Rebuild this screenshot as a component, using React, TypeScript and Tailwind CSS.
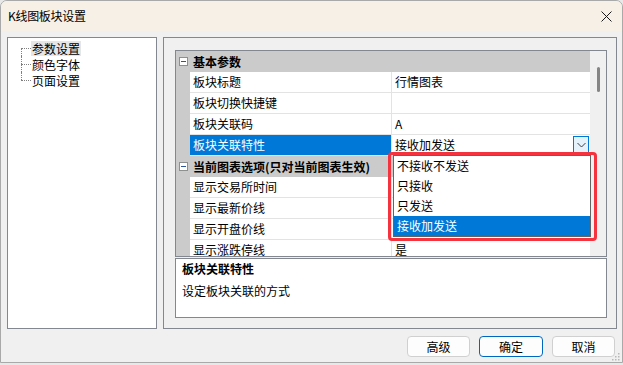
import { ReactElement } from 'react';

type Row = { name: string; value: string; selected?: boolean; combo?: boolean };
type Section = { title: string; rows: Row[] };

const sections: Section[] = [
  {
    title: '基本参数',
    rows: [
      { name: '板块标题', value: '行情图表' },
      { name: '板块切换快捷键', value: '' },
      { name: '板块关联码', value: 'A' },
      { name: '板块关联特性', value: '接收加发送', selected: true, combo: true },
    ],
  },
  {
    title: '当前图表选项(只对当前图表生效)',
    rows: [
      // values of these three sit under the open dropdown
      { name: '显示交易所时间', value: '' },
      { name: '显示最新价线', value: '' },
      { name: '显示开盘价线', value: '' },
      { name: '显示涨跌停线', value: '是' },
    ],
  },
];

const options = ['不接收不发送', '只接收', '只发送', '接收加发送'];
const treeItems = ['参数设置', '颜色字体', '页面设置'];

function TreeRow({ label, index, last }: { label: string; index: number; last: boolean }): ReactElement {
  return (
    <div className="flex h-[16px] items-stretch">
      <div className="ml-[13px] flex w-[10px] flex-col">
        <div className={`h-[8px] ${index === 0 ? '' : 'border-l border-dotted border-[#808080]'}`} />
        <div className={`h-[8px] border-t border-dotted border-[#808080] ${last ? '' : 'border-l'}`} />
      </div>
      <div className="flex items-center">
        <span className={`px-[1px] leading-[15px] ${index === 0 ? 'bg-[#e6e6e6]' : ''}`}>{label}</span>
      </div>
    </div>
  );
}

function MinusBox(): ReactElement {
  return (
    <div className="flex h-[9px] w-[9px] items-center justify-center border border-[#8e8f8f] bg-white">
      <div className="h-px w-[5px] bg-[#2b55a0]" />
    </div>
  );
}

export default function App(): ReactElement {
  return (
    <div
      className="relative h-[365px] w-[623px] overflow-hidden bg-[#e8e8e8] text-[12px] text-black"
      style={{ fontFamily: '"Noto Sans CJK SC", "Noto Sans", sans-serif' }}
    >
      <div className="flex h-[363px] flex-col overflow-hidden rounded-t-[7px] border border-[#a9a9a9] bg-[#f0f0f0]">
        {/* title bar */}
        <div className="flex h-[30px] shrink-0 items-center justify-between bg-[#f7f0e6] pl-[7px] pr-[8px]">
          <span className="text-[12px] tracking-[-0.3px]">K线图板块设置</span>
          <svg width="11" height="11" viewBox="0 0 11 11" className="mr-[2px]">
            <path d="M0.5 0.5 L10.5 10.5 M10.5 0.5 L0.5 10.5" stroke="#1a1a1a" strokeWidth="1" />
          </svg>
        </div>

        {/* body */}
        <div className="flex flex-1 flex-col pl-[6px] pr-[5px] pt-[6px]">
          <div className="flex gap-[6px]">
            {/* tree */}
            <div className="h-[292px] w-[150px] border border-[#828790] bg-white pt-[2px]">
              {treeItems.map((t, i) => (
                <TreeRow key={t} label={t} index={i} last={i === treeItems.length - 1} />
              ))}
            </div>

            {/* right panel */}
            <div className="flex h-[292px] w-[454px] flex-col border border-[#828790] px-[11px] pt-[12px]">
              {/* property grid */}
              <div className="flex h-[207px] w-[432px] border border-[#828790] bg-white">
                <div className="flex-1 overflow-hidden">
                  {sections.map((s) => (
                    <div key={s.title}>
                      <div className="flex h-[21px] items-center bg-[#cbcbcb] font-bold">
                        <div className="flex w-[14px] justify-center">
                          <MinusBox />
                        </div>
                        <span className="pl-[3px]">{s.title}</span>
                      </div>
                      {s.rows.map((r) => (
                        <div key={r.name} className="flex h-[21px]">
                          <div className="w-[14px] bg-[#cbcbcb]" />
                          <div
                            className={`flex w-[202px] items-center border-b border-r border-[#e3e3e3] pl-[3px] ${
                              r.selected ? 'bg-[#0078d7] text-white' : ''
                            }`}
                          >
                            {r.name}
                          </div>
                          <div className="flex flex-1 items-center justify-between border-b border-[#e3e3e3] pl-[3px] pr-[1px]">
                            <span>{r.value}</span>
                            {r.combo && (
                              <div className="flex h-[18px] w-[16px] items-center justify-center border border-[#0078d7] bg-[#e5f1fb]">
                                <svg width="9" height="6" viewBox="0 0 9 6">
                                  <path d="M0.5 1 L4.5 5 L8.5 1" fill="none" stroke="#404040" strokeWidth="1" />
                                </svg>
                              </div>
                            )}
                          </div>
                        </div>
                      ))}
                    </div>
                  ))}
                </div>
                {/* scrollbar */}
                <div className="flex w-[16px] justify-center bg-[#f0f0f0] pt-[16px]">
                  <div className="h-[25px] w-[3px] rounded-full bg-[#858585]" />
                </div>
              </div>

              {/* description */}
              <div className="mt-[1px] h-[60px] w-[432px] border border-[#828790] bg-white px-[6px] pt-[1px]">
                <div className="font-bold leading-[18px]">板块关联特性</div>
                <div className="mt-[4px] leading-[18px]">设定板块关联的方式</div>
              </div>
            </div>
          </div>

          {/* buttons */}
          <div className="mt-[7px] flex justify-end gap-[9px] pr-[2px]">
            <button className="h-[21px] w-[63px] rounded-[4px] border border-[#d0d0d0] bg-[#fdfdfd] leading-none">
              高级
            </button>
            <button className="h-[21px] w-[64px] rounded-[4px] border border-[#0067c0] bg-[#fdfdfd] leading-none">
              确定
            </button>
            <button className="h-[21px] w-[63px] rounded-[4px] border border-[#d0d0d0] bg-[#fdfdfd] leading-none">
              取消
            </button>
          </div>
        </div>
      </div>

      {/* resize grip */}
      <svg width="8" height="8" viewBox="0 0 8 8" className="absolute bottom-[4px] right-[3px]">
        <rect x="6" y="0" width="1.5" height="1.5" fill="#b8b8b8" />
        <rect x="3" y="3" width="1.5" height="1.5" fill="#b8b8b8" />
        <rect x="6" y="3" width="1.5" height="1.5" fill="#b8b8b8" />
        <rect x="0" y="6" width="1.5" height="1.5" fill="#b8b8b8" />
        <rect x="3" y="6" width="1.5" height="1.5" fill="#b8b8b8" />
        <rect x="6" y="6" width="1.5" height="1.5" fill="#b8b8b8" />
      </svg>

      {/* dropdown list */}
      <div className="absolute left-[393px] top-[155px] w-[198px] border border-[#646464] bg-white">
        {options.map((o, i) => (
          <div
            key={o}
            className={`flex h-[20px] items-center pl-[3px] ${i === options.length - 1 ? 'bg-[#0078d7] text-white' : ''}`}
          >
            {o}
          </div>
        ))}
      </div>

      {/* red annotation */}
      <div className="pointer-events-none absolute left-[388px] top-[152px] h-[89px] w-[209px] rounded-[4px] border-[3px] border-[#f5333f]" />
    </div>
  );
}
